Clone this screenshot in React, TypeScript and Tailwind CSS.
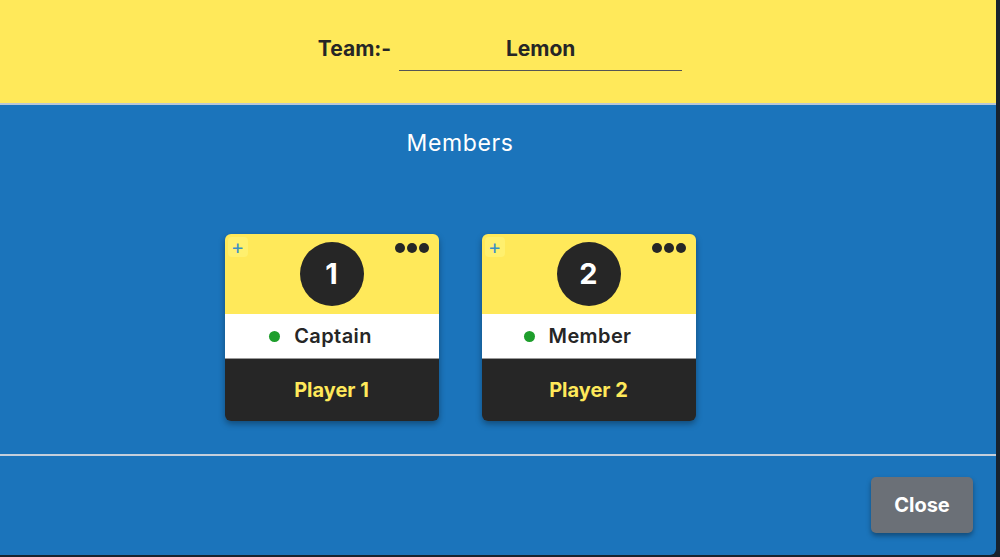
import React from 'react';

interface Member {
  no: number;
  role: string;
  name: string;
}

const MEMBERS: Member[] = [
  { no: 1, role: 'Captain', name: 'Player 1' },
  { no: 2, role: 'Member', name: 'Player 2' },
];

const MemberCard: React.FC<{ m: Member }> = ({ m }) => (
  <div className="w-[214px] rounded-md overflow-hidden shadow-[0_3px_6px_rgba(0,0,0,0.35)]">
    <div className="relative h-[80px] bg-[#ffe95a] flex items-center justify-center">
      <span className="absolute left-[3px] top-[3px] w-[20px] h-[20px] bg-[#fff06e] rounded-sm flex items-center justify-center text-[#3b8fc4] text-[20px] leading-none">
        +
      </span>
      <div className="absolute right-[10px] top-[9px] flex gap-[2px]">
        <span className="w-[10px] h-[10px] rounded-full bg-[#262626]" />
        <span className="w-[10px] h-[10px] rounded-full bg-[#262626]" />
        <span className="w-[10px] h-[10px] rounded-full bg-[#262626]" />
      </div>
      <div className="w-[64px] h-[64px] rounded-full bg-[#262626] flex items-center justify-center text-white text-[29px] font-bold">
        {m.no}
      </div>
    </div>
    <div className="h-[45px] bg-white flex items-center justify-center gap-[14px] pr-[22px] text-[#262626] text-[20px] tracking-[0.4px] font-semibold border-b border-[#999]">
      <span className="w-[11px] h-[11px] rounded-full bg-[#1e9e2c]" />
      <span>{m.role}</span>
    </div>
    <div className="h-[62px] bg-[#262626] flex items-center justify-center text-[#ffe95a] text-[20px] font-bold">
      {m.name}
    </div>
  </div>
);

export default function App() {
  return (
    <div className="w-[1000px] h-[557px] bg-[#17222e] overflow-hidden" style={{ fontFamily: 'Inter, "Noto Sans", sans-serif' }}>
      <div className="w-[996px] h-[555px] bg-[#1b74bb] rounded-br-md flex flex-col overflow-hidden">
        <div className="h-[105px] bg-[#ffe95a] border-b-2 border-[#b9c7d6] flex items-start justify-center gap-[8px] pt-[35px] pl-[4px]">
          <span className="text-[#262626] text-[21px] leading-[28px] font-bold">Team:-</span>
          <div className="w-[283px] border-b-[1.5px] border-[#555] pb-[7px] text-center text-[#262626] text-[21px] leading-[28px] font-bold">
            Lemon
          </div>
        </div>
        <div className="pr-[76px] flex flex-col items-center">
          <div className="mt-[22px] text-white text-[23px] leading-[32px] tracking-[0.6px]">Members</div>
          <div className="mt-[75px] flex gap-[43px]">
            {MEMBERS.map((m) => (
              <MemberCard key={m.no} m={m} />
            ))}
          </div>
        </div>
        <div className="mt-[33px] h-[2px] bg-[#c4cfdc]" />
        <div className="flex justify-end pr-[23px] pt-[21px]">
          <button className="w-[102px] h-[56px] bg-[#6b7077] rounded-[5px] text-white text-[20px] font-bold shadow-[0_3px_5px_rgba(0,0,0,0.35)]">
            Close
          </button>
        </div>
      </div>
    </div>
  );
}
